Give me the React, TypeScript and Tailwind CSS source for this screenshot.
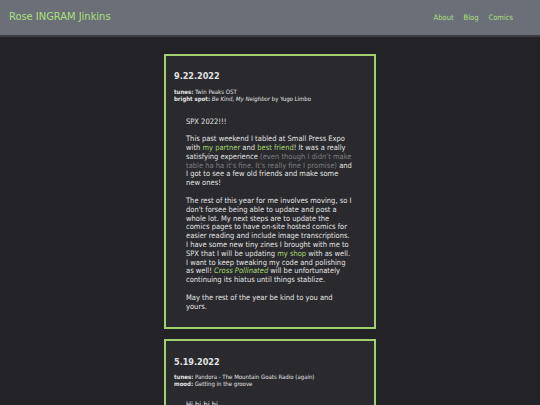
export default function App() {
  const font = { fontFamily: '"DejaVu Sans Condensed", "DejaVu Sans", Verdana, sans-serif' };
  return (
    <div className="min-h-screen bg-[#232327] text-[#e2e2e2]" style={font}>
      <header className="flex h-[37px] items-center justify-between border-b-2 border-[#3b3c41] bg-[#6b6f78] px-[9px]">
        <a className="text-[11px] text-[#a8e07c]">Rose INGRAM Jinkins</a>
        <nav className="flex gap-[10px] pr-[18px] text-[7.5px] text-[#a8e07c]">
          <a>About</a>
          <a>Blog</a>
          <a>Comics</a>
        </nav>
      </header>

      <main className="flex flex-col items-center gap-[10px] pt-[17px]">
        <article className="w-[212px] border-2 border-[#a3cf6e] bg-[#2a2a2e] px-[8px] pb-[15px] pt-[14px]">
          <h2 className="text-[9px] font-bold">9.22.2022</h2>
          <div className="mt-[4px] text-[6px] leading-[7px]">
            <div><b>tunes:</b> Twin Peaks OST</div>
            <div>
              <b>bright spot:</b> <i>Be Kind, My Neighbor</i> by Yugo Limbo
            </div>
          </div>
          <div className="mt-[16px] space-y-[9px] pl-[12px] text-[7.5px] leading-[8.8px]">
            <p>SPX 2022!!!</p>
            <p>
              This past weekend I tabled at Small Press Expo
              <br />
              with <span className="text-[#a8d870]">my partner</span> and{" "}
              <span className="text-[#a8d870]">best friend</span>! It was a really
              <br />
              satisfying experience{" "}
              <span className="text-[#7d7d80]">
                (even though I didn't make
                <br />
                table ha ha it's fine. It's really fine I promise)
              </span>{" "}
              and
              <br />
              I got to see a few old friends and make some
              <br />
              new ones!
            </p>
            <p>
              The rest of this year for me involves moving, so I
              <br />
              don't forsee being able to update and post a
              <br />
              whole lot. My next steps are to update the
              <br />
              comics pages to have on-site hosted comics for
              <br />
              easier reading and include image transcriptions.
              <br />
              I have some new tiny zines I brought with me to
              <br />
              SPX that I will be updating <span className="text-[#a8d870]">my shop</span> with as well.
              <br />
              I want to keep tweaking my code and polishing
              <br />
              as well! <i className="text-[#a8d870]">Cross Pollinated</i> will be unfortunately
              <br />
              continuing its hiatus until things stablize.
            </p>
            <p>
              May the rest of the year be kind to you and
              <br />
              yours.
            </p>
          </div>
        </article>

        <article className="w-[212px] border-2 border-[#a3cf6e] bg-[#2a2a2e] px-[8px] pb-[15px] pt-[15px]">
          <h2 className="text-[9px] font-bold">5.19.2022</h2>
          <div className="mt-[4px] text-[6px] leading-[7px]">
            <div><b>tunes:</b> Pandora - The Mountain Goats Radio (again)</div>
            <div><b>mood:</b> Getting in the groove</div>
          </div>
          <div className="mt-[14px] space-y-[9px] pl-[12px] text-[7.5px] leading-[8.8px]">
            <p>Hi hi hi hi</p>
            <p>Lorem ipsum</p>
          </div>
        </article>
      </main>
    </div>
  );
}
